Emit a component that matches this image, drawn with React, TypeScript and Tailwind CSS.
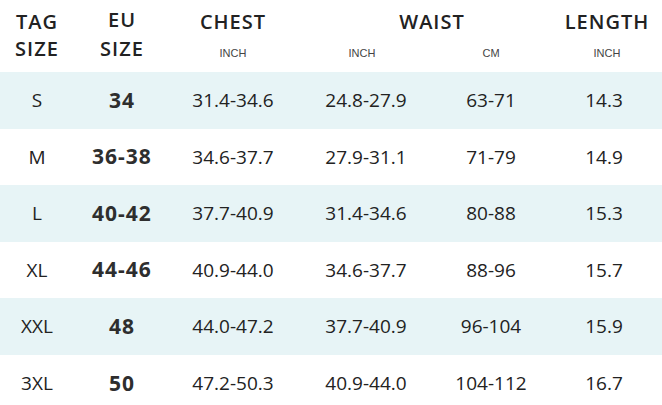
const rows = [
  ["S", "34", "31.4-34.6", "24.8-27.9", "63-71", "14.3"],
  ["M", "36-38", "34.6-37.7", "27.9-31.1", "71-79", "14.9"],
  ["L", "40-42", "37.7-40.9", "31.4-34.6", "80-88", "15.3"],
  ["XL", "44-46", "40.9-44.0", "34.6-37.7", "88-96", "15.7"],
  ["XXL", "48", "44.0-47.2", "37.7-40.9", "96-104", "15.9"],
  ["3XL", "50", "47.2-50.3", "40.9-44.0", "104-112", "16.7"],
];

const cols = "grid grid-cols-[74px_96px_126px_140px_110px_116px]";
const unit = "text-[11px] leading-[14px] mt-[11px] text-[#444] font-['Liberation_Sans',sans-serif]";

export default function App() {
  return (
    <div className="w-[662px] h-[405px] overflow-hidden bg-white text-[#222] font-['Open_Sans',sans-serif]">
      <div className={`${cols} h-[72px] items-start`}>
        <div className="flex flex-col items-center pt-[8px] text-[20px] font-semibold tracking-[1px] leading-[27px]">
          <span>TAG</span>
          <span>SIZE</span>
        </div>
        <div className="flex flex-col items-center pt-[5px] text-[20px] font-semibold tracking-[1px] leading-[29px]">
          <span>EU</span>
          <span>SIZE</span>
        </div>
        <div className="flex flex-col items-center pt-[8px]">
          <span className="text-[20px] font-semibold tracking-[1px] leading-[27px]">CHEST</span>
          <span className={unit}>INCH</span>
        </div>
        <div className="col-span-2 flex flex-col pt-[8px]">
          <span className="text-center pl-[22px] text-[20px] font-semibold tracking-[1px] leading-[27px]">WAIST</span>
          <div className={`flex ${unit}`}>
            <span className="w-[140px] text-center pr-[8px]">INCH</span>
            <span className="w-[110px] text-center">CM</span>
          </div>
        </div>
        <div className="flex flex-col items-center pt-[8px] pl-[6px]">
          <span className="text-[20px] font-semibold tracking-[1px] leading-[27px]">LENGTH</span>
          <span className={unit}>INCH</span>
        </div>
      </div>
      {rows.map((r, i) => (
        <div
          key={r[0]}
          className={`${cols} h-[56.6px] items-center text-[19px] ${i % 2 === 0 ? "bg-[#e7f4f6]" : "bg-white"}`}
        >
          <span className="text-center">{r[0]}</span>
          <span className="text-center font-bold text-[21px] tracking-[1px] text-[#2e2e2e]">{r[1]}</span>
          <span className="text-center">{r[2]}</span>
          <span className="text-center">{r[3]}</span>
          <span className="text-center">{r[4]}</span>
          <span className="text-center">{r[5]}</span>
        </div>
      ))}
    </div>
  );
}
